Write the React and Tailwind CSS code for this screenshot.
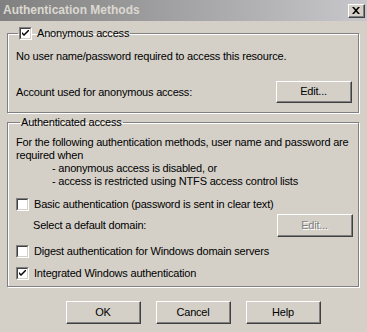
import React from "react";

const font = { fontFamily: '"Liberation Sans", Arial, sans-serif' };

function Check({ checked }) {
  return (
    <span className="inline-flex h-[13px] w-[13px] shrink-0 items-center justify-center border-t border-l border-t-[#808080] border-l-[#808080] border-b border-r border-b-white border-r-white">
      <span className="flex h-[11px] w-[11px] items-center justify-center border-t border-l border-t-[#404040] border-l-[#404040] border-b border-r border-b-[#d4d0c8] border-r-[#d4d0c8] bg-white">
        {checked && (
          <svg width="7" height="7" viewBox="0 0 7 7">
            <path d="M0 2 L0 4 L2 6 L7 1 L7 -1 L2 4 Z" fill="#000" />
          </svg>
        )}
      </span>
    </span>
  );
}

function Btn({ children, disabled, w = "w-[76px]", h = "h-[22px]" }) {
  return (
    <div className={`${w} ${h} border-t border-l border-t-white border-l-white border-b border-r border-b-[#404040] border-r-[#404040]`}>
      <div className="flex h-full w-full items-center justify-center border-b border-r border-b-[#808080] border-r-[#808080] bg-[#d4d0c8]">
        <span className={disabled ? "text-[#808080] [text-shadow:1px_1px_0_#fff]" : "text-black"}>{children}</span>
      </div>
    </div>
  );
}

export default function App() {
  return (
    <div className="h-[332px] w-[367px] overflow-hidden whitespace-nowrap bg-[#d4d0c8] text-[11px] leading-[13px] tracking-[-0.2px] text-black" style={font}>
      {/* Title bar */}
      <div className="flex h-[21px] items-center justify-between bg-gradient-to-r from-[#808080] to-[#c8c8cc] pl-[3px] pr-[2px]">
        <span className="font-bold text-[12px] tracking-normal text-[#dcd8d0]">Authentication Methods</span>
        <div className="h-[14px] w-[17px] border-t border-l border-t-white border-l-white border-b border-r border-b-[#404040] border-r-[#404040]">
          <div className="flex h-full w-full items-center justify-center border-b border-r border-b-[#808080] border-r-[#808080] bg-[#d4d0c8]">
            <svg width="8" height="7" viewBox="0 0 8 7">
              <path d="M0 0h2l2 2.3L6 0h2L5 3.5 8 7H6L4 4.7 2 7H0l3-3.5z" fill="#000" />
            </svg>
          </div>
        </div>
      </div>

      {/* Group 1 */}
      <fieldset className="ml-[7px] mt-[6px] w-[352px] h-[86px] border border-[#808080] shadow-[inset_1px_1px_0_#fff,1px_1px_0_#fff] px-[8px]">
        <legend className="ml-[2px] flex items-center gap-[5px] px-[1px]">
          <Check checked />
          <span>Anonymous access</span>
        </legend>
        <div className="mt-[10px]">No user name/password required to access this resource.</div>
        <div className="mt-[18px] flex items-center justify-between">
          <span>Account used for anonymous access:</span>
          <div className="mr-[-2px]">
            <Btn>Edit...</Btn>
          </div>
        </div>
      </fieldset>

      {/* Group 2 */}
      <fieldset className="ml-[7px] mt-[3px] w-[352px] h-[171px] border border-[#808080] shadow-[inset_1px_1px_0_#fff,1px_1px_0_#fff] px-[8px]">
        <legend className="ml-[4px] px-[1px]">Authenticated access</legend>
        <div className="mt-[7px]">For the following authentication methods, user name and password are</div>
        <div>required when</div>
        <div className="ml-[36px]">- anonymous access is disabled, or</div>
        <div className="ml-[36px]">- access is restricted using NTFS access control lists</div>

        <div className="mt-[10px] flex items-center gap-[5px]">
          <Check />
          <span>Basic authentication (password is sent in clear text)</span>
        </div>
        <div className="mt-[3px] flex items-center justify-between">
          <span className="ml-[17px]">Select a default domain:</span>
          <div className="mr-[-3px]">
            <Btn disabled h="h-[23px]">Edit...</Btn>
          </div>
        </div>
        <div className="mt-[8px] flex items-center gap-[5px]">
          <Check />
          <span>Digest authentication for Windows domain servers</span>
        </div>
        <div className="mt-[9px] flex items-center gap-[5px]">
          <Check checked />
          <span>Integrated Windows authentication</span>
        </div>
      </fieldset>

      {/* Buttons */}
      <div className="mt-[14px] ml-[66px] flex gap-[15px]">
        <Btn w="w-[75px]" h="h-[23px]">OK</Btn>
        <Btn w="w-[75px]" h="h-[23px]">Cancel</Btn>
        <Btn w="w-[75px]" h="h-[23px]">Help</Btn>
      </div>
    </div>
  );
}
